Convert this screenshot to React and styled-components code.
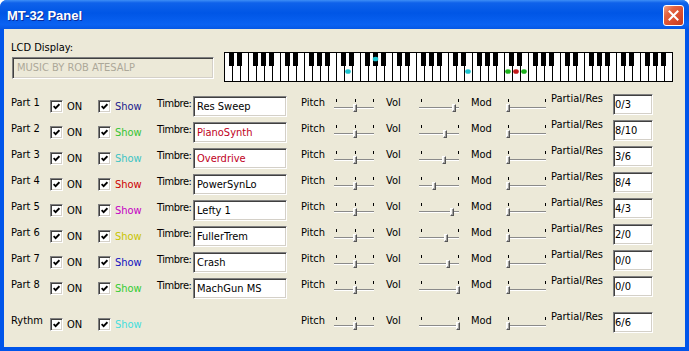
import React from 'react';
import styled, { createGlobalStyle } from 'styled-components';

const GlobalStyle = createGlobalStyle`
  html, body {
    margin: 0;
    padding: 0;
    background: #fff;
  }
  body {
    font-family: "DejaVu Sans Condensed", "DejaVu Sans", sans-serif;
    font-stretch: condensed;
    font-size: 11px;
  }
`;

const Window = styled.div`
  width: 689px;
  height: 351px;
  display: flex;
  flex-direction: column;
  background: #0055ea;
  border-radius: 7px 7px 0 0;
  overflow: hidden;
  font-family: "DejaVu Sans Condensed", "DejaVu Sans", sans-serif;
  font-stretch: condensed;
  font-size: 11px;
  color: #000;
`;

const TitleBar = styled.div`
  height: 29px;
  flex: none;
  display: flex;
  align-items: flex-start;
  justify-content: space-between;
  padding: 0 5px 0 7px;
  background: linear-gradient(180deg, #3d8ef6 0%, #0f62ea 10%, #0056e6 45%, #0a62f2 85%, #0657e4 100%);
`;

const Title = styled.span`
  margin-top: 8px;
  color: #fff;
  font: bold 13px "Liberation Sans", Arial, sans-serif;
  font-stretch: normal;
  line-height: 15px;
  text-shadow: 1px 1px #0a2a99;
`;

const CloseButton = styled.div`
  width: 21px;
  height: 21px;
  margin-top: 5px;
  box-sizing: border-box;
  border: 1px solid #fff;
  border-radius: 3px;
  background: linear-gradient(135deg, #f0a387 0%, #e4633f 30%, #d8492b 70%, #c23c20 100%);
  display: flex;
  align-items: center;
  justify-content: center;
`;

const Body = styled.div`
  flex: 1;
  margin: 0 4px 4px;
  padding: 12px 0 0 7px;
  background: #ece9d8;
`;

const TopSection = styled.div`
  display: flex;
  align-items: flex-start;
`;

const LcdColumn = styled.div`
  width: 213px;
  display: flex;
  flex-direction: column;
`;

const Label = styled.div`
  line-height: 13px;
  white-space: nowrap;
  padding-top: ${p => p.$top || 0}px;
  color: ${p => p.$color || '#000'};
`;

const TimbreLabel = styled(Label)`
  letter-spacing: -0.45px;
`;

const LcdBox = styled.div`
  box-sizing: border-box;
  width: 202px;
  height: 22px;
  margin: 3px 0 0 1px;
  padding: 0 4px;
  border: 1px solid;
  border-color: #808080 #fff #fff #808080;
  box-shadow: inset 1px 1px #404040, inset -1px -1px #d4d0c8;
  background: #ece9d8;
  color: #aca899;
  line-height: 20px;
  white-space: nowrap;
`;

const Keyboard = styled.svg`
  display: block;
  margin-top: 11px;
`;

const Rows = styled.div`
  margin-top: 9px;
`;

const Row = styled.div`
  display: grid;
  grid-template-columns: 39px 48px 59px 36px 108px 32px 53px 32px 53px 34px 46px 62px 40px;
  align-items: start;
  height: 26px;
  margin-top: ${p => p.$gap || 0}px;
`;

const CheckCell = styled.label`
  display: flex;
  align-items: center;
  gap: 4px;
  height: 13px;
  margin-top: 9px;
  line-height: 13px;
  color: ${p => p.$color || '#000'};
`;

const CheckBox = styled.span`
  flex: none;
  width: 13px;
  height: 13px;
  box-sizing: border-box;
  border: 1px solid;
  border-color: #808080 #fff #fff #808080;
  box-shadow: inset 1px 1px #404040, inset -1px -1px #d4d0c8;
  background: #fff;
  display: flex;
  align-items: center;
  justify-content: center;
`;

const TextBox = styled.div`
  box-sizing: border-box;
  width: ${p => p.$w}px;
  height: 21px;
  margin-top: ${p => p.$top}px;
  padding: 0 ${p => p.$pad}px;
  border: 1px solid;
  border-color: #808080 #fff #fff #808080;
  box-shadow: inset 1px 1px #404040, inset -1px -1px #d4d0c8;
  background: #fff;
  color: ${p => p.$color || '#000'};
  line-height: 19px;
  white-space: nowrap;
  overflow: hidden;
`;

const SliderBox = styled.div`
  position: relative;
  width: 43px;
  height: 14px;
  margin-top: 8px;
`;

const Ticks = styled.div`
  display: flex;
  justify-content: space-between;
  height: 3px;
  padding: 0 2px 0 3px;
`;

const Tick = styled.span`
  width: 1px;
  height: 3px;
  background: #000;
`;

const Track = styled.div`
  height: 1px;
  margin: 5px 2px 0 1px;
  border-top: 1px solid #8a8a8a;
  background: #fff;
`;

const Thumb = styled.span`
  position: absolute;
  top: 5px;
  width: 4px;
  height: 8px;
  box-sizing: border-box;
  background: #f4f3ee;
  border-top: 1px solid #fff;
  border-left: 1px solid #fff;
  border-right: 1px solid #555;
  border-bottom: 1px solid #555;
  box-shadow: inset -1px -1px #a0a0a0;
`;

const Check = () => (
  <svg width="7" height="7" viewBox="0 0 7 7">
    <path d="M0.6 3.2 L2.6 5.2 L6.4 1.2" fill="none" stroke="#000" strokeWidth="1.8" />
  </svg>
);

const CloseIcon = () => (
  <svg width="11" height="11" viewBox="0 0 11 11">
    <path d="M1.5 1.5 L9.5 9.5 M9.5 1.5 L1.5 9.5" stroke="#fff" strokeWidth="2" strokeLinecap="square" />
  </svg>
);

const BLACK_OFFSETS = [5, 13, 29, 37, 45];

const notes = [
  { x: 124, y: 19.5, c: '#19c3cf' },
  { x: 151.5, y: 7, c: '#19c3cf' },
  { x: 244, y: 19.5, c: '#19c3cf' },
  { x: 284, y: 19.5, c: '#1bb21b' },
  { x: 292, y: 19.5, c: '#c41a1a' },
  { x: 300, y: 19.5, c: '#1bb21b' },
];

const Piano = () => {
  const whites = [];
  for (let k = 1; k < 56; k++) {
    whites.push(<line key={k} x1={k * 8 + 0.5} y1="0" x2={k * 8 + 0.5} y2="30" stroke="#000" />);
  }
  const blacks = [];
  for (let o = 0; o < 8; o++) {
    BLACK_OFFSETS.forEach((off, i) => {
      blacks.push(<rect key={`${o}-${i}`} x={o * 56 + off} y="0" width="5" height="14" fill="#000" />);
    });
  }
  return (
    <Keyboard width="449" height="30" viewBox="0 0 449 30">
      <rect x="0.5" y="0.5" width="448" height="29" fill="#fff" stroke="#000" />
      {whites}
      {blacks}
      {notes.map((n, i) => (
        <ellipse key={i} cx={n.x} cy={n.y} rx="2.8" ry="2.3" fill={n.c} />
      ))}
    </Keyboard>
  );
};

const Slider = ({ value, ticks = 2 }) => (
  <SliderBox>
    <Ticks>
      {Array.from({ length: ticks }).map((_, i) => <Tick key={i} />)}
    </Ticks>
    <Track />
    <Thumb style={{ left: Math.round(1 + value * 37) }} />
  </SliderBox>
);

const parts = [
  { name: 'Part 1', show: '#1a1a8c', timbre: 'Res Sweep', vol: 0.89, partial: '0/3' },
  { name: 'Part 2', show: '#33c433', timbre: 'PianoSynth', timbreColor: '#c0001c', vol: 0.64, partial: '8/10' },
  { name: 'Part 3', show: '#3cc4c4', timbre: 'Overdrive', timbreColor: '#c0001c', vol: 0.61, partial: '3/6' },
  { name: 'Part 4', show: '#cc0000', timbre: 'PowerSynLo', vol: 0.35, partial: '8/4' },
  { name: 'Part 5', show: '#c400c4', timbre: 'Lefty 1', vol: 0.84, partial: '4/3' },
  { name: 'Part 6', show: '#c8c400', timbre: 'FullerTrem', vol: 0.68, partial: '2/0' },
  { name: 'Part 7', show: '#1010c0', timbre: 'Crash', vol: 0.73, partial: '0/0' },
  { name: 'Part 8', show: '#33cc33', timbre: 'MachGun MS', vol: 1, partial: '0/0' },
];

const rythm = { name: 'Rythm', show: '#44dede', vol: 1, partial: '6/6' };

const PartRow = ({ part, gap }) => (
  <Row $gap={gap}>
    <Label $top={5}>{part.name}</Label>
    <CheckCell>
      <CheckBox><Check /></CheckBox>
      ON
    </CheckCell>
    <CheckCell $color={part.show}>
      <CheckBox><Check /></CheckBox>
      Show
    </CheckCell>
    {part.timbre ? <TimbreLabel $top={6}>Timbre:</TimbreLabel> : <span />}
    {part.timbre ? (
      <TextBox $w={94} $top={5} $pad={3} $color={part.timbreColor}>{part.timbre}</TextBox>
    ) : <span />}
    <Label $top={5}>Pitch</Label>
    <Slider value={0.5} ticks={3} />
    <Label $top={5}>Vol</Label>
    <Slider value={part.vol} />
    <Label $top={5}>Mod</Label>
    <Slider value={0} />
    <Label $top={1}>Partial/Res</Label>
    <TextBox $w={40} $top={3} $pad={1}>{part.partial}</TextBox>
  </Row>
);

export default function App() {
  return (
    <>
      <GlobalStyle />
      <Window>
        <TitleBar>
          <Title>MT-32 Panel</Title>
          <CloseButton><CloseIcon /></CloseButton>
        </TitleBar>
        <Body>
          <TopSection>
            <LcdColumn>
              <Label>LCD Display:</Label>
              <LcdBox>MUSIC BY ROB ATESALP</LcdBox>
            </LcdColumn>
            <Piano />
          </TopSection>
          <Rows>
            {parts.map(p => <PartRow key={p.name} part={p} />)}
            <PartRow part={rythm} gap={10} />
          </Rows>
        </Body>
      </Window>
    </>
  );
}
